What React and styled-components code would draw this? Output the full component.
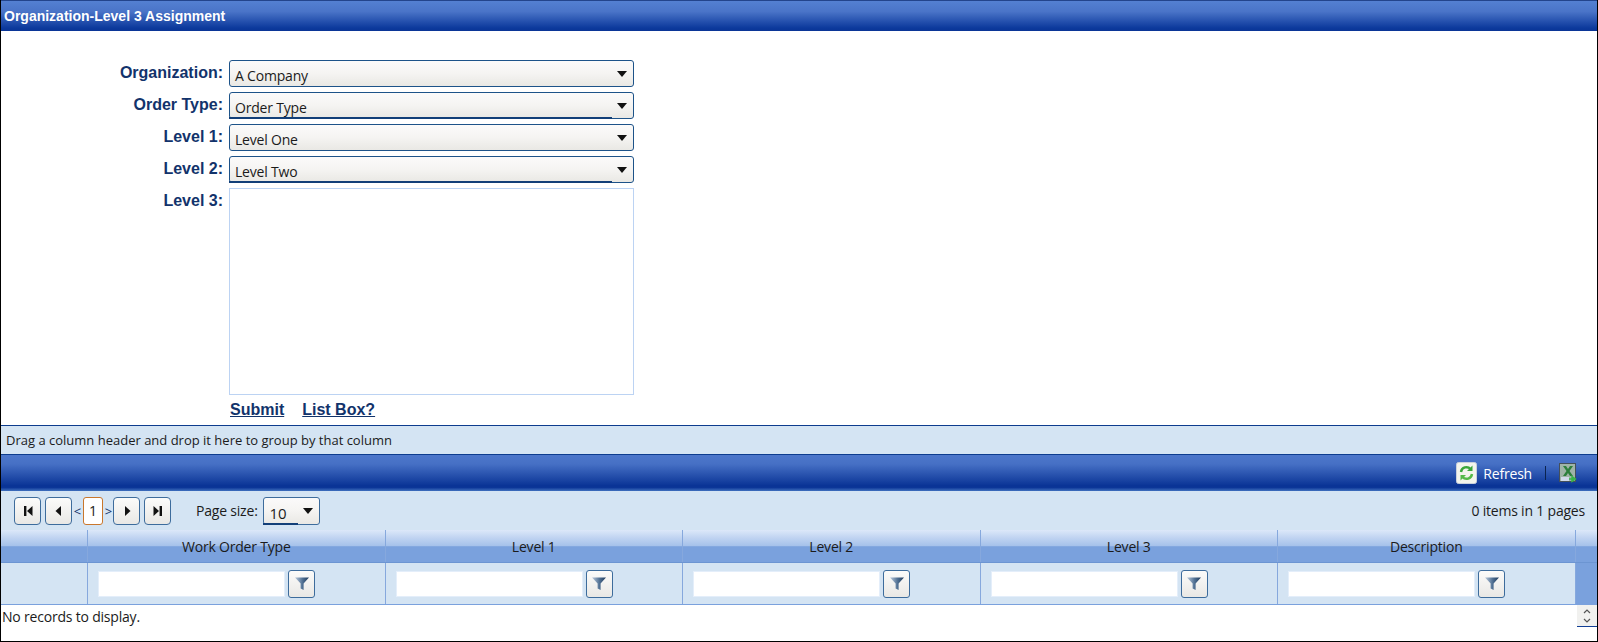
import React from 'react'
import styled, { createGlobalStyle } from 'styled-components'

const GlobalStyle = createGlobalStyle`
  html, body {
    margin: 0;
    padding: 0;
    background: #fff;
  }
`
const Page = styled.div`
  width: 1598px;
  height: 642px;
  box-sizing: border-box;
  border: 1px solid #000;
  border-top: none;
  display: flex;
  flex-direction: column;
  overflow: hidden;
  font-family: 'Open Sans', 'Noto Sans', sans-serif;
  font-size: 13px;
  color: #1b1b1b;
`
const TitleBar = styled.div`
  height: 31px;
  flex: none;
  box-sizing: border-box;
  border-top: 1px solid #23448c;
  padding: 0 3px;
  display: flex;
  align-items: center;
  background: linear-gradient(#5480d2 0%, #4a74c8 35%, #0c399c 90%, #0a3596 100%);
  color: #fff;
  font: bold 14px 'Liberation Sans', sans-serif;
`
const Form = styled.div`
  height: 394px;
  flex: none;
  box-sizing: border-box;
  padding-top: 29px;
  display: grid;
  grid-template-columns: 222px 405px;
  grid-auto-rows: min-content;
  column-gap: 6px;
  row-gap: 5px;
`
const Label = styled.label`
  text-align: right;
  color: #12336b;
  font: bold 16px/26px 'Liberation Sans', sans-serif;
  height: 27px;
`
const Select = styled.div`
  position: relative;
  height: 27px;
  box-sizing: border-box;
  border: 1px solid #1d5389;
  border-radius: 3px;
  padding: 3px 5px 0;
  background: linear-gradient(#fbfafa 0%, #f5f4f2 50%, #e9e8e4 100%);
  line-height: 24px;
  font-size: 14px;
  letter-spacing: -0.2px;

  ${(props) =>
    props.$underline &&
    `&::after {
      content: '';
      position: absolute;
      left: -1px;
      right: 21px;
      bottom: -1px;
      height: 2px;
      background: #123f78;
    }`}
`
const Caret = styled.span`
  position: absolute;
  right: 6px;
  top: 10px;
  width: 0;
  height: 0;
  border-left: 5px solid transparent;
  border-right: 5px solid transparent;
  border-top: 6px solid #111;
`
const ListBox = styled.div`
  height: 207px;
  box-sizing: border-box;
  border: 1px solid #bcd3f3;
  background: #fff;
`
const Links = styled.div`
  grid-column: 2;
  display: flex;
  gap: 18px;
  margin-top: 0;
  padding-left: 1px;
`
const LinkText = styled.a`
  color: #12336b;
  font: bold 16px/20px 'Liberation Sans', sans-serif;
  text-decoration: underline;
`
const GroupPanel = styled.div`
  height: 30px;
  flex: none;
  box-sizing: border-box;
  border-top: 1px solid #0d3c8e;
  border-bottom: 1px solid #0d3c8e;
  padding-left: 5px;
  display: flex;
  align-items: center;
  background: #d4e4f3;
`
const CommandBar = styled.div`
  height: 36px;
  flex: none;
  box-sizing: border-box;
  padding-right: 20px;
  display: flex;
  align-items: center;
  justify-content: flex-end;
  background: linear-gradient(#4c76ca 0%, #4670c5 25%, #0a3496 85%, #0a3496 90%, #3f70be 100%);
  color: #fff;
  font-size: 14px;
`
const RefreshLabel = styled.span`
  margin: 0 13px 0 6px;
  letter-spacing: -0.2px;
`
const Separator = styled.span`
  width: 1px;
  height: 14px;
  margin-right: 13px;
  background: #0b234f;
`
const IconWrap = styled.span`
  display: flex;
`
const Pager = styled.div`
  height: 39px;
  flex: none;
  box-sizing: border-box;
  padding: 0 12px 0 13px;
  display: flex;
  align-items: center;
  background: #d4e4f3;
`
const PagerButton = styled.button`
  width: 27px;
  height: 28px;
  box-sizing: border-box;
  margin: 0 ${(props) => props.$gap || 4}px 0 0;
  padding: 0;
  display: flex;
  align-items: center;
  justify-content: center;
  border: 1px solid #3d6c9c;
  border-radius: 4px;
  background: linear-gradient(#fbfbfa, #e9e8e5);
`
const Angle = styled.span`
  width: 9px;
  font-size: 13px;
  text-align: center;
  color: #12336b;
`
const PageNumber = styled.span`
  width: 20px;
  height: 28px;
  box-sizing: border-box;
  margin: 0 1px;
  display: flex;
  align-items: center;
  justify-content: center;
  border: 1px solid #c9772c;
  border-radius: 3px;
  background: #fff;
  font-size: 14px;
`
const PageSizeLabel = styled.span`
  margin: 0 5px 0 21px;
  font-size: 14px;
  letter-spacing: -0.2px;
`
const PageSize = styled(Select)`
  width: 57px;
  height: 28px;
  padding-left: 6px;
  border-color: #3d6c9c;
  font-size: 15px;
`
const ItemCount = styled.span`
  margin-left: auto;
  font-size: 14px;
  letter-spacing: -0.2px;
`
const Row = styled.div`
  display: grid;
  grid-template-columns: 87px repeat(5, 297.5px) 1fr;
  flex: none;
`
const HeaderRow = styled(Row)`
  height: 33px;
  background: linear-gradient(#dce8f9 0%, #bfd3f1 25%, #a5c1ea 50%, #7aa1dd 52%, #7aa1dd 100%);
  border-bottom: 1px solid #6c95d2;
  box-sizing: border-box;
`
const HeaderCell = styled.div`
  border-right: ${(props) => (props.$plain ? 'none' : '1px solid #86a8dd')};
  display: flex;
  align-items: center;
  justify-content: center;
  font-size: 14px;
  letter-spacing: -0.2px;
`
const FilterRow = styled(Row)`
  height: 42px;
  box-sizing: border-box;
  background: #d4e4f3;
  border-bottom: 1px solid #7aa1dd;
`
const FilterCell = styled.div`
  box-sizing: border-box;
  padding-left: 10px;
  display: flex;
  align-items: center;
  gap: 3px;
  border-right: 1px solid #86a8dd;
`
const FilterInput = styled.div`
  width: 187px;
  height: 26px;
  box-sizing: border-box;
  border: 1px solid #e4eefa;
  background: #fff;
`
const FilterButton = styled.button`
  width: 27px;
  height: 28px;
  box-sizing: border-box;
  padding: 0;
  display: flex;
  align-items: center;
  justify-content: center;
  border: 1px solid #3d6c9c;
  border-radius: 3px;
  background: linear-gradient(#fbfbfa, #e9e8e5);
`
const ScrollGutter = styled.div`
  background: #7aa1dd;
`
const Body = styled.div`
  flex: 1;
  display: flex;
  justify-content: space-between;
  align-items: flex-start;
  background: #fff;
  padding-left: 1px;
`
const EmptyText = styled.span`
  font-size: 14px;
  line-height: 24px;
  letter-spacing: -0.2px;
`
const ScrollArrows = styled.div`
  width: 20px;
  height: 22px;
  box-sizing: border-box;
  display: flex;
  align-items: center;
  justify-content: center;
  background: #f1f1ef;
  border-bottom: 1px solid #123f96;
`

const columns = ['Work Order Type', 'Level 1', 'Level 2', 'Level 3', 'Description']

function PagerIcon({ kind }) {
  const paths = {
    first: 'M3 2h2.4v10H3zM11.5 2v10L6 7z',
    prev: 'M9 2v10L3.5 7z',
    next: 'M5 2v10l5.5-5z',
    last: 'M2.5 2v10L8 7zM8.6 2H11v10H8.6z',
  }
  return (
    <svg width="14" height="14" viewBox="0 0 14 14">
      <path d={paths[kind]} fill="#111" />
    </svg>
  )
}

function FunnelIcon() {
  return (
    <svg width="16" height="15" viewBox="0 0 16 15">
      <defs>
        <linearGradient id="funnel" x1="0" y1="0" x2="1" y2="0">
          <stop offset="0" stopColor="#b9c9dc" />
          <stop offset="0.55" stopColor="#4f6f92" />
          <stop offset="1" stopColor="#1f3b5c" />
        </linearGradient>
      </defs>
      <path d="M1 1.5h14L9.6 7.5V14L6.6 12.5V7.5z" fill="url(#funnel)" />
    </svg>
  )
}

function RefreshIcon() {
  return (
    <svg width="21" height="22" viewBox="0 0 21 22">
      <rect x="0.5" y="0.5" width="20" height="21" rx="2" fill="#f3f4ec" stroke="#c9d0dc" />
      <path d="M5 10a5.5 5.5 0 0 1 9.5-3" fill="none" stroke="#3aa63a" strokeWidth="2.4" />
      <path d="M16.5 3.5v5.5h-5.5z" fill="#3aa63a" />
      <path d="M16 12a5.5 5.5 0 0 1-9.5 3" fill="none" stroke="#55b948" strokeWidth="2.4" />
      <path d="M4.5 18.5V13h5.5z" fill="#55b948" />
    </svg>
  )
}

function ExcelIcon() {
  return (
    <svg width="18" height="20" viewBox="0 0 18 20">
      <rect x="0.5" y="0.5" width="16" height="18" fill="#9fb4a8" stroke="#45505a" />
      <path d="M4 3h3l2 3 2-3h3l-3.5 5 3.5 5h-3l-2-3-2 3H4l3.5-5z" fill="#2c7f3c" />
      <rect x="2" y="14" width="8" height="4" fill="#cfd9ea" />
      <path d="M10 16h5M13 13.5l3.5 2.5-3.5 2.5z" stroke="#39b54a" strokeWidth="1.4" fill="#39b54a" />
    </svg>
  )
}

export default function App() {
  return (
    <Page>
      <GlobalStyle />
      <TitleBar>Organization-Level 3 Assignment</TitleBar>
      <Form>
        <Label>Organization:</Label>
        <Select>
          A Company
          <Caret />
        </Select>
        <Label>Order Type:</Label>
        <Select $underline>
          Order Type
          <Caret />
        </Select>
        <Label>Level 1:</Label>
        <Select>
          Level One
          <Caret />
        </Select>
        <Label>Level 2:</Label>
        <Select $underline>
          Level Two
          <Caret />
        </Select>
        <Label>Level 3:</Label>
        <ListBox />
        <Links>
          <LinkText>Submit</LinkText>
          <LinkText>List Box?</LinkText>
        </Links>
      </Form>
      <GroupPanel>Drag a column header and drop it here to group by that column</GroupPanel>
      <CommandBar>
        <IconWrap>
          <RefreshIcon />
        </IconWrap>
        <RefreshLabel>Refresh</RefreshLabel>
        <Separator />
        <IconWrap>
          <ExcelIcon />
        </IconWrap>
      </CommandBar>
      <Pager>
        <PagerButton>
          <PagerIcon kind="first" />
        </PagerButton>
        <PagerButton $gap={1}>
          <PagerIcon kind="prev" />
        </PagerButton>
        <Angle>&lt;</Angle>
        <PageNumber>1</PageNumber>
        <Angle>&gt;</Angle>
        <PagerButton>
          <PagerIcon kind="next" />
        </PagerButton>
        <PagerButton>
          <PagerIcon kind="last" />
        </PagerButton>
        <PageSizeLabel>Page size:</PageSizeLabel>
        <PageSize $underline>
          10
          <Caret />
        </PageSize>
        <ItemCount>0 items in 1 pages</ItemCount>
      </Pager>
      <HeaderRow>
        <HeaderCell />
        {columns.map((name) => (
          <HeaderCell key={name}>{name}</HeaderCell>
        ))}
        <HeaderCell $plain />
      </HeaderRow>
      <FilterRow>
        <FilterCell />
        {columns.map((name) => (
          <FilterCell key={name}>
            <FilterInput />
            <FilterButton>
              <FunnelIcon />
            </FilterButton>
          </FilterCell>
        ))}
        <ScrollGutter />
      </FilterRow>
      <Body>
        <EmptyText>No records to display.</EmptyText>
        <ScrollArrows>
          <svg width="10" height="18" viewBox="0 0 10 18">
            <path d="M2 6l3-3 3 3M2 12l3 3 3-3" fill="none" stroke="#555" strokeWidth="1.2" />
          </svg>
        </ScrollArrows>
      </Body>
    </Page>
  )
}
